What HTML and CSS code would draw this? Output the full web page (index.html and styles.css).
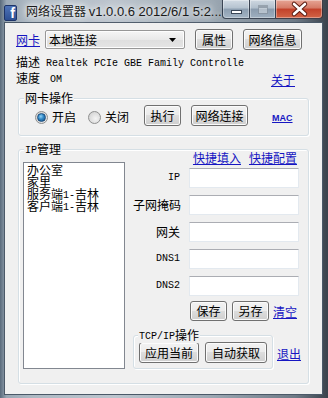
FILE: index.html
```html
<!DOCTYPE html>
<html>
<head>
<meta charset="utf-8">
<link rel="stylesheet" href="styles.css">
</head>
<body>
<div class="window">
  <div class="titlebar">
    <div class="app-icon"><span>f</span></div>
    <div class="title">网络设置器 <span class="tl">v1.0.0.6 2012/6/1 5:2...</span></div>
    <div class="caption-btns">
      <div class="cbtn min"><span class="glyph-min"></span></div>
      <div class="cbtn max"><span class="glyph-max"></span></div>
      <div class="cbtn close">
        <svg width="45" height="18" viewBox="0 0 45 18">
          <path d="M17 4 L28 14 M28 4 L17 14" stroke="#5a1a10" stroke-width="4.5" stroke-linecap="round"/>
          <path d="M17 4 L28 14 M28 4 L17 14" stroke="#ffffff" stroke-width="2.6" stroke-linecap="round"/>
        </svg>
      </div>
    </div>
  </div>
  <div class="client">
    <div class="row r1">
      <a class="link nic">网卡</a>
      <div class="combo"><span class="combo-text">本地连接</span>
        <svg class="combo-arrow" width="7" height="4" viewBox="0 0 7 4"><path d="M0 0 H7 L3.5 4 Z" fill="#000"/></svg>
      </div>
      <button class="btn b-attr">属性</button>
      <button class="btn b-info">网络信息</button>
    </div>
    <div class="line r2">描述<span class="m desc">Realtek PCIe GBE Family Controlle</span></div>
    <div class="row r3"><span class="line">速度<span class="m speed">OM</span></span><a class="link about">关于</a></div>

    <div class="group g1">
      <span class="legend">网卡操作</span>
      <div class="g1-row">
        <label class="radio"><span class="rdot on"></span><span class="rtext">开启</span></label>
        <label class="radio r-off"><span class="rdot"></span><span class="rtext">关闭</span></label>
        <button class="btn b-exec">执行</button>
        <button class="btn b-conn">网络连接</button>
        <a class="link mac">MAC</a>
      </div>
    </div>

    <div class="group g2">
      <span class="legend"><span class="m">IP</span>管理</span>
      <div class="listbox">
        <div class="item">办公室</div>
        <div class="item">家里</div>
        <div class="item">服务端<span class="m">1-</span>吉林</div>
        <div class="item">客户端<span class="m">1-</span>吉林</div>
      </div>
      <div class="rightcol">
        <div class="quick">
          <a class="link">快捷填入</a>
          <a class="link q2">快捷配置</a>
        </div>
        <div class="form">
          <span class="flabel m">IP</span><span class="input"></span>
          <span class="flabel">子网掩码</span><span class="input"></span>
          <span class="flabel">网关</span><span class="input"></span>
          <span class="flabel m">DNS1</span><span class="input"></span>
          <span class="flabel m">DNS2</span><span class="input"></span>
        </div>
        <div class="saverow">
          <button class="btn b-save">保存</button>
          <button class="btn b-saveas">另存</button>
          <a class="link clear">清空</a>
        </div>
        <div class="tcprow">
          <div class="group g3">
            <span class="legend"><span class="m">TCP/IP</span>操作</span>
            <button class="btn b-apply">应用当前</button>
            <button class="btn b-auto">自动获取</button>
          </div>
          <a class="link quit">退出</a>
        </div>
      </div>
    </div>
  </div>
</div>
</body>
</html>
```

FILE: styles.css
```css
* { box-sizing: border-box; }
body { margin: 0; background: #3d4c5c; }

.window {
  width: 328px;
  height: 398px;
  overflow: hidden;
  font-family: "Noto Sans CJK SC", "Liberation Sans", sans-serif;
  font-size: 12px;
  color: #000;
  background: linear-gradient(to right, #5a6b7c 0%, #9aa8b5 2%, #aeb9c3 10%, #bcc5ce 35%, #9ba7b2 65%, #6e7a86 90%, #3a424c 100%);
}

/* ---------- title bar ---------- */
.titlebar {
  height: 22px;
  display: flex;
  align-items: center;
}
.app-icon {
  width: 13px;
  height: 16px;
  margin-left: 4px;
  margin-top: 3px;
  border-radius: 2px;
  background: linear-gradient(#4f74b8, #2d4f93);
  border: 1px solid #1d3468;
  display: flex;
  justify-content: flex-end;
  align-items: flex-end;
  overflow: hidden;
}
.app-icon span {
  font-family: "Liberation Sans", sans-serif;
  font-weight: bold;
  font-size: 14px;
  line-height: 13px;
  color: #fff;
  margin-right: 1px;
}
.title {
  margin-left: 9px;
  margin-top: 1px;
  font-size: 12px;
  line-height: 16px;
  color: #1a1a1a;
  white-space: nowrap;
  text-shadow: 0 0 5px #fff, 0 0 9px rgba(255,255,255,0.9), 0 0 14px rgba(255,255,255,0.7);
}
.tl {
  font-family: "Liberation Sans", sans-serif;
  font-size: 13px;
}
.caption-btns {
  margin-left: auto;
  margin-right: 5px;
  align-self: flex-start;
  display: flex;
}
.cbtn {
  height: 19px;
  border: 1px solid rgba(35,45,60,0.85);
  border-top: none;
  display: flex;
  align-items: center;
  justify-content: center;
  box-shadow: inset 0 0 0 1px rgba(255,255,255,0.35);
}
.min {
  width: 27px;
  border-radius: 0 0 0 4px;
  border-right: none;
  background: linear-gradient(#d2dbe4, #b4c2cf 45%, #8c9eb0 50%, #a3b4c4);
}
.max {
  width: 27px;
  background: linear-gradient(#cfd8e1, #b1bfcc 45%, #8a9bad 50%, #9fb0c0);
}
.close {
  width: 47px;
  border-radius: 0 0 4px 0;
  border-left: none;
  background: linear-gradient(#e6a595, #d57a66 45%, #c2412a 50%, #d26446);
}
.glyph-min {
  width: 11px;
  height: 4px;
  margin-top: 6px;
  background: #fff;
  border: 1px solid #3b4757;
}
.glyph-max {
  width: 10px;
  height: 9px;
  border: 1px solid rgba(80,95,110,0.45);
  border-top-width: 3px;
  background: rgba(255,255,255,0.35);
}

/* ---------- client ---------- */
.client {
  margin-left: 4px;
  width: 319px;
  height: 373px;
  background: #f0f0f0;
  border: 1px solid #4b5968;
  padding: 6px 0 0 11px;
}
.m {
  font-family: "Liberation Mono", monospace;
  font-size: 10px;
  vertical-align: 1px;
}
.link {
  color: #1616c2;
  text-decoration: underline;
  cursor: pointer;
}
.row {
  display: flex;
  align-items: center;
  white-space: nowrap;
}
.line {
  display: block;
  white-space: nowrap;
  line-height: 16px;
}
.r1 { height: 21px; }
.r2 { height: 16px; margin-top: 4px; }
.r3 { height: 17px; align-items: flex-start; }
.desc { margin-left: 6px; }
.speed { margin-left: 10px; }
.about { margin-left: auto; margin-right: 27px; margin-top: 3px; line-height: 14px; }

.btn {
  font-family: "Noto Sans CJK SC", sans-serif;
  font-size: 12px;
  line-height: 14px;
  color: #000;
  padding: 0;
  height: 21px;
  border: 1px solid #707070;
  border-radius: 3px;
  background: linear-gradient(#f2f2f2 0%, #ebebeb 49%, #dddddd 50%, #cfcfcf 100%);
  box-shadow: inset 0 0 0 1px #fbfbfb;
}

.combo {
  margin-left: 5px;
  width: 140px;
  height: 19px;
  border: 1px solid #979797;
  border-radius: 2px;
  background: linear-gradient(#f6f6f6, #e9e9e9 50%, #dedede 51%, #e4e4e4);
  box-shadow: inset 0 0 0 1px #fdfdfd;
  display: flex;
  align-items: center;
  padding-left: 3px;
}
.combo-text { line-height: 14px; }
.combo-arrow { margin-left: auto; margin-right: 8px; }
.b-attr { margin-left: 10px; width: 38px; }
.b-info { margin-left: 10px; width: 59px; }

/* ---------- group boxes ---------- */
.group {
  position: relative;
  border: 1px solid #d5dfe5;
  border-radius: 3px;
  box-shadow: inset 1px 1px 0 #fff, 1px 1px 0 #fff;
}
.legend {
  position: absolute;
  top: -8px;
  left: 5px;
  padding: 0 1px;
  line-height: 13px;
  background: #f0f0f0;
  white-space: nowrap;
}
.g1 {
  margin-top: 11px;
  margin-left: 2px;
  width: 291px;
  height: 38px;
}
.g1-row {
  display: flex;
  align-items: center;
  height: 21px;
  margin-top: 6px;
  padding-left: 16px;
}
.radio {
  display: flex;
  align-items: center;
  margin-top: 3px;
}
.r-off { margin-left: 12px; }
.rtext { margin-left: 4px; line-height: 14px; }
.rdot {
  width: 13px;
  height: 13px;
  border-radius: 50%;
  border: 1px solid #8e8f8f;
  background: radial-gradient(circle at 60% 60%, #f4f4f4 0, #dcdcdc 60%, #c9c9c9 100%);
  display: flex;
  align-items: center;
  justify-content: center;
}
.rdot.on::after {
  content: "";
  width: 7px;
  height: 7px;
  border-radius: 50%;
  background: radial-gradient(circle at 40% 35%, #8fd0f5 0, #2f86c4 45%, #164a7c 100%);
  border: 1px solid #1c4d7d;
}
.b-exec { margin-left: 15px; width: 37px; }
.b-conn { margin-left: 10px; width: 57px; }
.mac {
  margin-left: 24px;
  margin-top: 5px;
  font-family: "Liberation Sans", sans-serif;
  font-weight: bold;
  font-size: 9px;
  line-height: 10px;
}

.g2 {
  margin-top: 13px;
  margin-left: 2px;
  width: 291px;
  height: 235px;
  display: flex;
  align-items: flex-start;
  padding-left: 4px;
}
.g2 > .legend { left: 5px; }
.listbox {
  margin-top: 12px;
  width: 102px;
  height: 207px;
  background: #fff;
  border: 1px solid #828790;
  padding: 1px 3px;
}
.item {
  line-height: 12px;
  height: 12px;
  white-space: nowrap;
}
.rightcol {
  margin-left: 8px;
  width: 175px;
}
.quick {
  margin-top: 1px;
  height: 14px;
  line-height: 14px;
  display: flex;
  justify-content: flex-end;
  padding-right: 11px;
}
.q2 { margin-left: 8px; }
.form {
  margin-top: 3px;
  display: grid;
  grid-template-columns: 47px 110px;
  column-gap: 9px;
  grid-auto-rows: 20px;
  row-gap: 7px;
}
.flabel {
  text-align: right;
  line-height: 20px;
  white-space: nowrap;
}
.flabel.m { vertical-align: baseline; }
.input {
  background: #fff;
  border: 1px solid #e3e9ef;
  border-top-color: #abadb3;
}
.saverow {
  margin-top: 5px;
  display: flex;
  align-items: center;
  padding-left: 57px;
}
.saverow .btn { height: 20px; width: 37px; }
.b-saveas { margin-left: 5px; }
.clear { margin-left: 4px; }
.tcprow {
  margin-top: 14px;
  display: flex;
  align-items: center;
}
.g3 {
  width: 140px;
  height: 34px;
  display: flex;
  padding: 6px 5px 0 5px;
}
.g3 > .legend { left: 4px; }
.b-apply { width: 60px; }
.b-auto { width: 62px; margin-left: 6px; }
.quit { margin-left: 4px; margin-top: 2px; }
```
